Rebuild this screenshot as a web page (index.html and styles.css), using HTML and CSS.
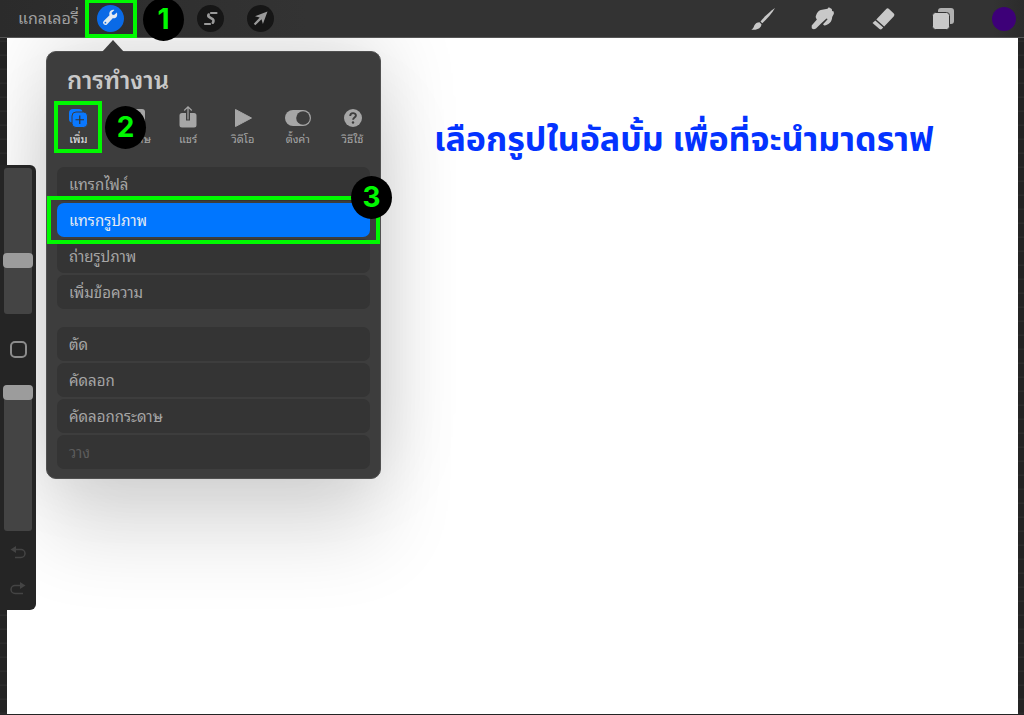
FILE: index.html
```html
<!DOCTYPE html>
<html lang="th">

<head>
    <meta charset="UTF-8">
    <meta name="viewport" content="width=device-width, initial-scale=1.0">
    <title>การทำงาน</title>
    <link rel="stylesheet" href="styles.css">
</head>

<body>
    <header class="topbar">
        <nav class="topbar-left">
            <a href="#" class="gallery-link">แกลเลอรี่</a>
            <button type="button" class="tool-btn active" aria-label="การทำงาน">
                <svg width="27" height="27" viewBox="0 0 27 27">
                    <path d="M19.9 7.4l-2.9 2.7-1.9-.5-.5-1.9 2.8-2.8c-2.3-.6-4.8.9-5.1 3.4-.1.7 0 1.3.2 1.9L6.7 15.9a2.3 2.3 0 1 0 3.5 3.3l5.5-6c2.6.8 5.5-1.4 4.2-5.800z" fill="#e4eaf2"/>
                    <circle cx="8.4" cy="17.7" r=".9" fill="#0a6ae6"/>
                </svg>
                <span class="frame frame-tool"></span>
                <span class="step step-one">1</span>
            </button>
            <button type="button" class="tool-btn" aria-label="การปรับ"></button>
            <button type="button" class="tool-btn" aria-label="การเลือก">
                <svg width="27" height="27" viewBox="0 0 27 27" fill="none" stroke="#9a9a9a" stroke-linecap="round" stroke-linejoin="round">
                    <path d="M14 8h5.500M8 19h5" stroke-width="2.200"/>
                    <path d="M11.600 9.500c-.6 1.200-.2 2 .8 2.600l3.200 2c1.200.9 1.100 2.500.2 3.600" stroke-width="2.600"/>
                </svg>
            </button>
            <button type="button" class="tool-btn" aria-label="ปรับรูปแบบ">
                <svg width="27" height="27" viewBox="0 0 27 27">
                    <path d="M20.500 6.500L8 11.200l4.700 1.300-5.900 6.200 1.500 1.500 6.200-5.900 1.400 4.700z" fill="#9a9a9a"/>
                </svg>
            </button>
        </nav>
        <div class="topbar-right">
            <button type="button" class="paint-btn" aria-label="แปรง">
                <svg width="26" height="26" viewBox="0 0 26 26" fill="#c8c8c8">
                    <path d="M25 2C20.500 5 14.500 10.500 10.500 15.500l1.800 1.700C17 13 22 7.500 25 2z"/>
                    <path d="M9.500 16.200l2 2c-.2 3.500-4 6.300-10.200 5.300 2.300-.8 2.200-2.200 3-4 .9-2.100 3-3.300 5.200-3.300z"/>
                </svg>
            </button>
            <button type="button" class="paint-btn" aria-label="เกลี่ย">
                <svg width="26" height="26" viewBox="0 0 26 26" fill="#c8c8c8">
                    <path d="M6 9.500C7 6 9 4 12 3.700l5.500-.9 1.300-1.500 3 1.800.3 2 1.600.5.2 2.200-1.700 3.300c-.3 4.700-3.200 8.100-8 8.400l-1.200-1.300 4.500-5.100-1-.7-5.700 5.300-4.800 4.800c-1.700 1-4 .9-4.300-.8v-2.200l5.200-6.100C5.900 12 5.300 11 6 9.500z"/>
                    <path d="M12.800 17.500l4-4" stroke="#333" stroke-width="1" fill="none"/>
                </svg>
            </button>
            <button type="button" class="paint-btn" aria-label="ลบ">
                <svg width="26" height="26" viewBox="0 0 26 26" fill="#c8c8c8">
                    <path d="M16.200 3.100a2 2 0 0 1 2.800-.1l4.800 4.500a2 2 0 0 1 .1 2.700l-9.700 10.200-7.900-6.900z"/>
                    <path d="M5.300 14.600l7.900 6.900-1.200 1.300a2 2 0 0 1-2.500.2l-7-6.100z"/>
                </svg>
            </button>
            <button type="button" class="paint-btn" aria-label="เลเยอร์">
                <svg width="26" height="26" viewBox="0 0 26 26" fill="#c8c8c8">
                    <rect x="8" y="2" width="16" height="16" rx="3" fill="#b0b0b0"/>
                    <rect x="2.500" y="6.500" width="17" height="17" rx="3" stroke="#333" stroke-width="1"/>
                </svg>
            </button>
            <button type="button" class="color-btn" aria-label="สี"></button>
        </div>
    </header>

    <main class="workspace">
        <section class="canvas">
            <h1 class="caption">เลือกรูปในอัลบั้ม เพื่อที่จะนำมาดราฟ</h1>
        </section>

        <aside class="sidebar">
            <input type="range" class="slider" min="0" max="100" value="35" aria-label="ขนาดแปรง">
            <button type="button" class="modify-btn" aria-label="ปรับเปลี่ยน"></button>
            <input type="range" class="slider" min="0" max="100" value="100" aria-label="ความทึบ">
            <div class="history">
                <button type="button" class="history-btn" aria-label="เลิกทำ">
                    <svg width="16" height="14" viewBox="0 0 16 14">
                        <path d="M4 3.500h7a3.800 3.800 0 0 1 0 8H5" fill="none" stroke="#444" stroke-width="1.500"/>
                        <path d="M.5 3.500L6 0v7z" fill="#444"/>
                    </svg>
                </button>
                <button type="button" class="history-btn" aria-label="ทำซ้ำ">
                    <svg width="16" height="14" viewBox="0 0 16 14">
                        <path d="M12 3.500H5a3.800 3.800 0 0 0 0 8h8" fill="none" stroke="#444" stroke-width="1.500"/>
                        <path d="M15.500 3.500L10 0v7z" fill="#444"/>
                    </svg>
                </button>
            </div>
        </aside>

        <div class="popover">
            <h2 class="popover-title">การทำงาน</h2>
            <div class="tabs">
                <button type="button" class="tab active">
                    <svg width="20" height="20" viewBox="0 0 20 20">
                        <path d="M4 14.500C2 14.500 1 13 1 11V5c0-2.500 1.500-4 4-4h6c2 0 3.500 1 3.500 3" fill="#0a78ff"/>
                        <rect x="4" y="4" width="15.500" height="15.500" rx="4" fill="#0a78ff" stroke="#3d3d3d"/>
                        <path d="M11.750 7.500v8.500M7.500 11.750H16" stroke="#333" stroke-width="1.200"/>
                    </svg>
                    <span>เพิ่ม</span>
                    <span class="frame frame-tab"></span>
                    <span class="step step-two">2</span>
                </button>
                <button type="button" class="tab">
                    <svg width="24" height="20" viewBox="0 0 24 20">
                        <rect x="0" y="1" width="24" height="18" rx="3" fill="#a6a6a6"/>
                    </svg>
                    <span>กระดาษ</span>
                </button>
                <button type="button" class="tab">
                    <svg width="20" height="24" viewBox="0 0 20 24">
                        <path d="M4 7h4v7.500h4V7h4a2.500 2.500 0 0 1 2.500 2.500V19a2.500 2.500 0 0 1-2.500 2.500H4A2.500 2.500 0 0 1 1.500 19V9.500A2.500 2.500 0 0 1 4 7z" fill="#a6a6a6"/>
                        <path d="M10 13.500V.8M6.200 4.500L10 .8l3.800 3.700" fill="none" stroke="#a6a6a6" stroke-width="1.200"/>
                    </svg>
                    <span>แชร์</span>
                </button>
                <button type="button" class="tab">
                    <svg width="20" height="20" viewBox="0 0 20 20">
                        <path d="M2.500 1.500L18.500 10l-16 8.500z" fill="#a6a6a6" stroke="#a6a6a6" stroke-linejoin="round"/>
                    </svg>
                    <span>วิดีโอ</span>
                </button>
                <button type="button" class="tab">
                    <svg width="26" height="20" viewBox="0 0 26 20">
                        <rect x="0" y="2" width="26" height="16" rx="8" fill="#a6a6a6"/>
                        <circle cx="18" cy="10" r="6.800" fill="#3d3d3d"/>
                    </svg>
                    <span>ตั้งค่า</span>
                </button>
                <button type="button" class="tab">
                    <svg width="20" height="20" viewBox="0 0 20 20">
                        <circle cx="10" cy="10" r="9" fill="#a6a6a6"/>
                        <path d="M7.200 8c0-3.800 5.700-3.700 5.700-.5 0 2-2.800 2.200-2.800 4.300" fill="none" stroke="#3d3d3d" stroke-width="1.900"/>
                        <circle cx="10" cy="14.500" r="1.200" fill="#3d3d3d"/>
                    </svg>
                    <span>วิธีใช้</span>
                </button>
            </div>
            <div class="menu">
                <button type="button" class="menu-item">แทรกไฟล์</button>
                <button type="button" class="menu-item active">
                    แทรกรูปภาพ
                    <span class="frame frame-item"></span>
                    <span class="step step-three">3</span>
                </button>
                <button type="button" class="menu-item">ถ่ายรูปภาพ</button>
                <button type="button" class="menu-item">เพิ่มข้อความ</button>
            </div>
            <div class="menu">
                <button type="button" class="menu-item">ตัด</button>
                <button type="button" class="menu-item">คัดลอก</button>
                <button type="button" class="menu-item">คัดลอกกระดาษ</button>
                <button type="button" class="menu-item" disabled>วาง</button>
            </div>
        </div>
    </main>
</body>

</html>
```
FILE: styles.css
```css
* {
    margin: 0;
    padding: 0;
    box-sizing: border-box;
}

body {
    display: flex;
    flex-direction: column;
    min-height: 100vh;
    font-family: Thonburi, "Noto Sans Thai Looped", Loma, "Noto Sans", "Liberation Sans", sans-serif;
    background: repeating-linear-gradient(180deg, #242424 0, #242424 12px, #2c2c2c 13px, #2c2c2c 14px);
    color: #a6a6a6;
}

button {
    position: relative;
    border: none;
    background: none;
    color: inherit;
    font-family: inherit;
    cursor: pointer;
}

svg {
    display: block;
}

/* top bar */
.topbar {
    position: relative;
    z-index: 2;
    display: flex;
    justify-content: space-between;
    align-items: center;
    height: 38px;
    padding: 0 8px 0 18px;
    background: linear-gradient(90deg, #2b2b2b, #333 30%, #333 97%, #2b2b2b);
    border-bottom: 1px solid #555;
}

.topbar-left {
    display: flex;
    align-items: center;
    gap: 23px;
}

.gallery-link {
    width: 56px;
    padding-bottom: 3px;
    color: #a0a0a0;
    font-size: 16px;
    line-height: 20px;
    white-space: nowrap;
    text-decoration: none;
}

.tool-btn {
    width: 27px;
    height: 27px;
    border-radius: 50%;
    background: #161616;
}

.tool-btn.active {
    z-index: 1;
    background: #0a6ae6;
}

.topbar-right {
    display: flex;
    align-items: center;
    gap: 34px;
}

.paint-btn {
    width: 26px;
    height: 26px;
}

.color-btn {
    width: 24px;
    height: 24px;
    margin-left: 2px;
    border-radius: 50%;
    background: #3d0078;
}

/* canvas */
.workspace {
    position: relative;
    display: flex;
    flex: 1;
    padding: 0 6px 1px 7px;
}

.canvas {
    flex: 1;
    padding: 75px 80px 0 427px;
    background: #fff;
}

.caption {
    color: #0433ff;
    font-family: "Noto Sans Thai", "Noto Sans", sans-serif;
    font-size: 34px;
    font-weight: 700;
    line-height: 56px;
    white-space: nowrap;
}

/* brush sidebar */
.sidebar {
    position: absolute;
    top: 127px;
    left: 0;
    z-index: 1;
    display: flex;
    flex-direction: column;
    align-items: center;
    width: 36px;
    padding: 3px 0 14px;
    border-radius: 0 6px 6px 0;
    background: #252525;
}

.slider {
    width: 30px;
    height: 146px;
    appearance: none;
    background: none;
    writing-mode: vertical-lr;
    direction: rtl;
}

.slider::-webkit-slider-runnable-track {
    width: 28px;
    border-radius: 3px;
    background: #444;
}

.slider::-webkit-slider-thumb {
    width: 30px;
    height: 15px;
    margin-left: -1px;
    appearance: none;
    border-radius: 4px;
    background: #9c9c9c;
}

.modify-btn {
    width: 17px;
    height: 17px;
    margin: 27px 0;
    border: 2px solid #8c8c8c;
    border-radius: 5px;
}

.history {
    display: flex;
    flex-direction: column;
    gap: 22px;
    padding-top: 15px;
}

.history-btn {
    width: 16px;
    height: 14px;
}

/* actions popover */
.popover {
    position: absolute;
    top: 13px;
    left: 46px;
    width: 335px;
    padding: 10px 10px 9px;
    border: 1px solid #505050;
    border-radius: 10px;
    background: #3d3d3d;
    box-shadow: 0 -10px 80px rgba(0, 0, 0, 0.15), 0 60px 80px rgba(0, 0, 0, 0.12);
}

.popover::before {
    content: "";
    position: absolute;
    top: -12px;
    left: 55px;
    border: 11px solid transparent;
    border-top: none;
    border-bottom: 12px solid #3d3d3d;
}

.popover-title {
    padding: 0 0 8px 10px;
    color: #c8c8c8;
    font-size: 24px;
    font-weight: 600;
    line-height: 32px;
}

.tabs {
    display: grid;
    grid-template-columns: repeat(6, 1fr);
    margin: 0 -10px 25px -6px;
}

.tab {
    display: flex;
    flex-direction: column;
    align-items: center;
    font-size: 11px;
    line-height: 8px;
    white-space: nowrap;
}

.tab svg {
    height: 32px;
}

.tab.active {
    z-index: 1;
    color: #e8e8e8;
}

.menu {
    display: flex;
    flex-direction: column;
    gap: 2px;
}

.menu + .menu {
    margin-top: 18px;
}

.menu-item {
    height: 34px;
    padding: 0 12px 3px;
    border-radius: 7px;
    background: #343434;
    font-size: 15px;
    line-height: 20px;
    text-align: left;
}

.menu-item.active {
    z-index: 1;
    background: #0076ff;
    color: #e4eaf2;
}

.menu-item:disabled {
    color: #5c5c5c;
}

/* step markers */
.frame {
    position: absolute;
    border: 4px solid #00f900;
    pointer-events: none;
}

.frame-tool {
    inset: -6px -13px -6px -12px;
}

.frame-tab {
    inset: -1px 4px -11px 3px;
}

.frame-item {
    inset: -7px -10px;
}

.step {
    position: absolute;
    width: 41px;
    height: 43px;
    border-radius: 50%;
    background: #000;
    color: #00f900;
    font-family: Inter, "Liberation Sans", sans-serif;
    font-size: 28px;
    font-weight: 700;
    line-height: 43px;
    text-align: center;
}

.step-one {
    top: -7px;
    left: 46px;
}

.step-two {
    top: 4px;
    left: 54px;
}

.step-three {
    top: -27px;
    right: -22px;
}
```
